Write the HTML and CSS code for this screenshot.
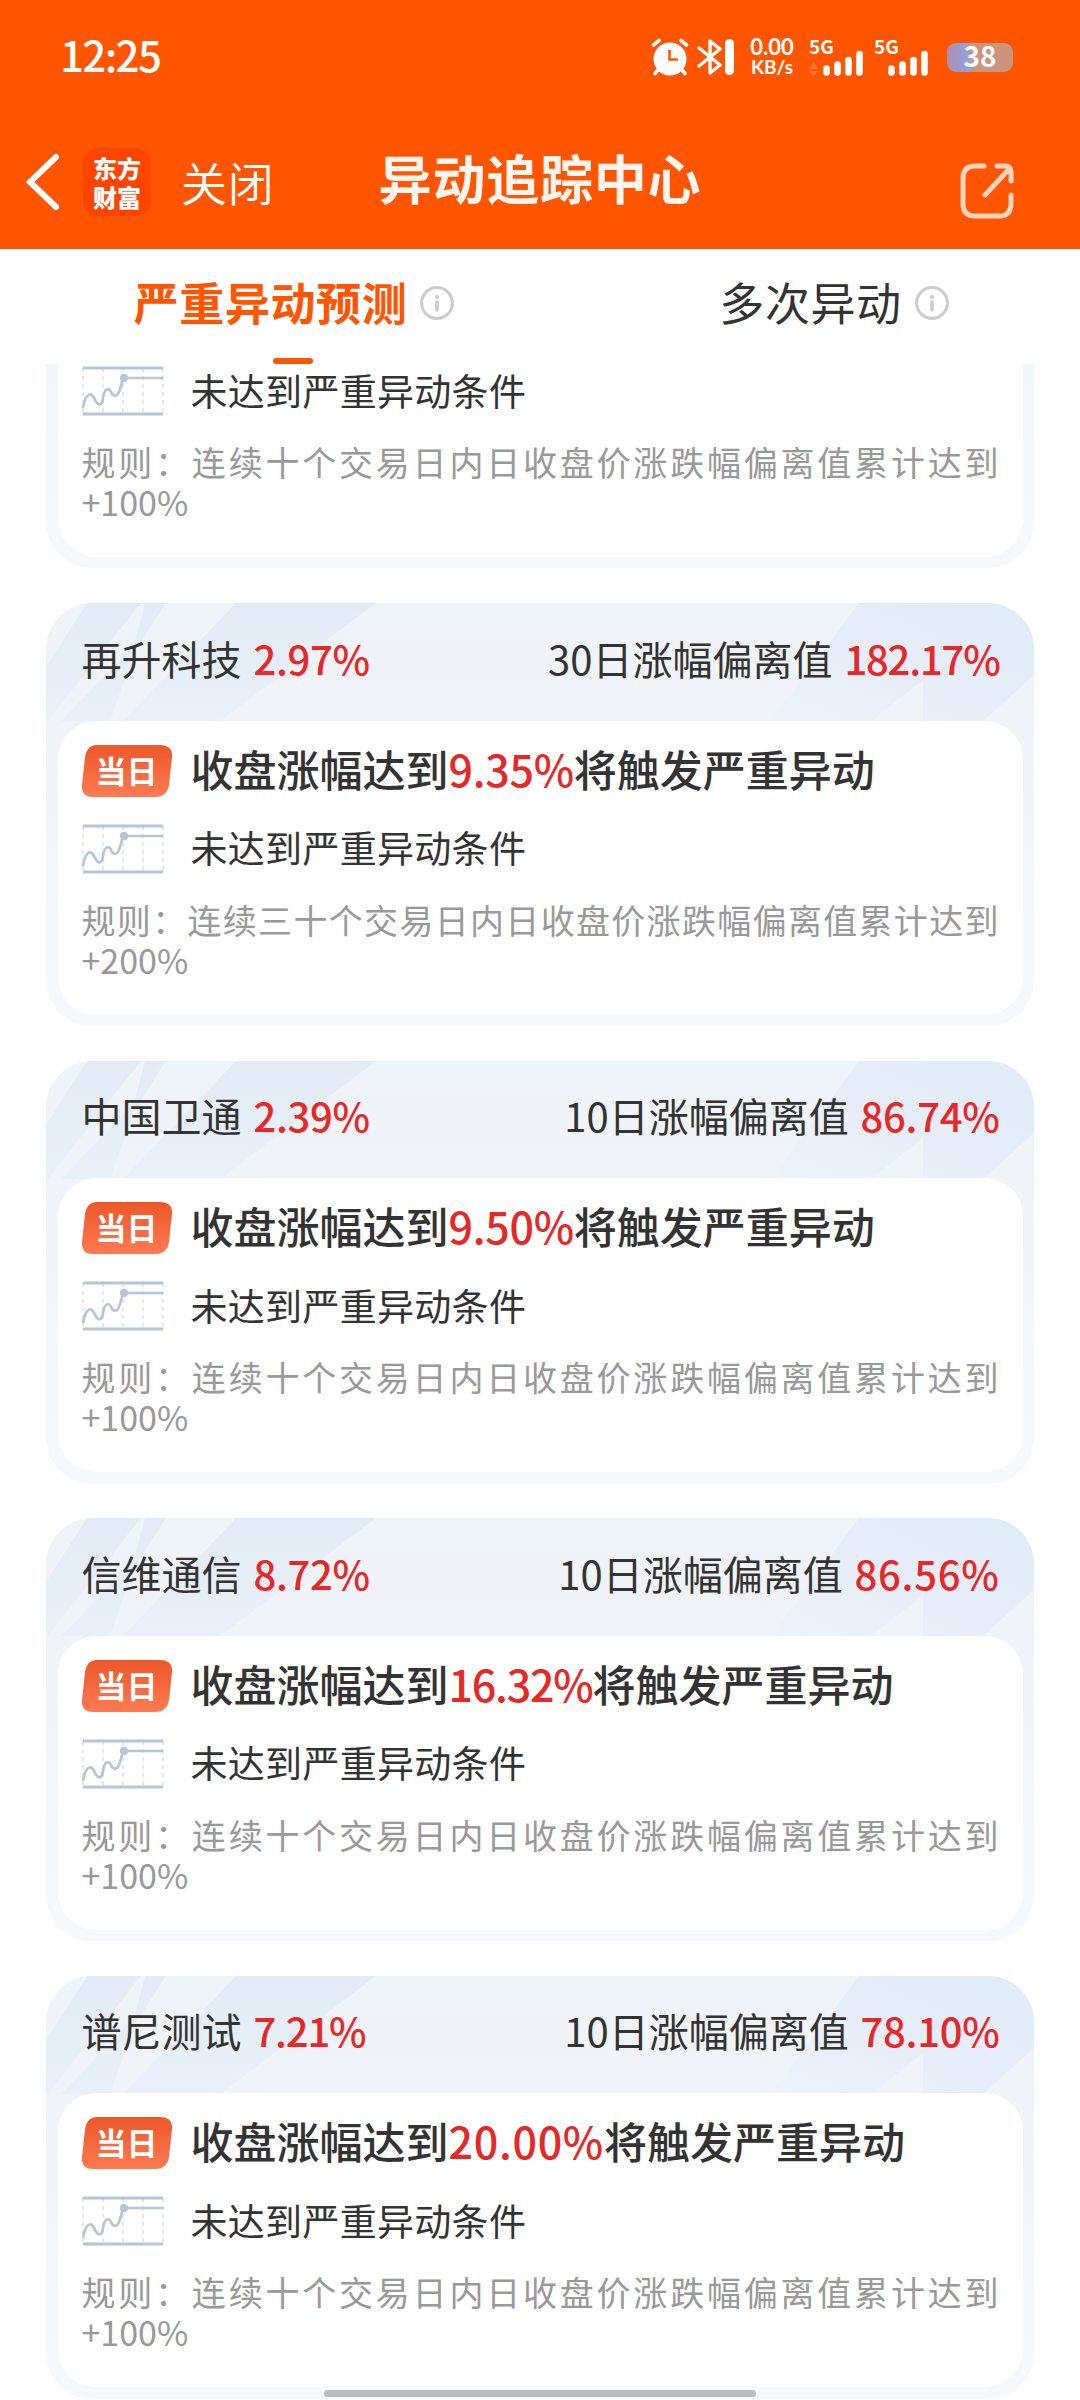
FILE: index.html
```html
<!DOCTYPE html>
<html lang="zh-CN">

<head>
    <meta charset="UTF-8">
    <meta name="viewport" content="width=device-width, initial-scale=1.0">
    <title>异动追踪中心</title>
    <link rel="stylesheet" href="styles.css">
</head>

<body>
    <!-- 公用图形 -->
    <svg class="defs" width="0" height="0">
        <defs>
            <linearGradient id="stripe" x1="0" y1="0" x2="0" y2="1">
                <stop offset="0" stop-color="#e2ebf5" />
                <stop offset="1" stop-color="#e9f0f9" />
            </linearGradient>
            <linearGradient id="stripeRight" x1="0" y1="1" x2="1" y2="0">
                <stop offset="0" stop-color="#edf3fa" />
                <stop offset="0.5" stop-color="#e6edf8" />
                <stop offset="1" stop-color="#deebf8" />
            </linearGradient>
            <linearGradient id="badge" x1="0" y1="0" x2="0" y2="1">
                <stop offset="0" stop-color="#ec5729" />
                <stop offset="1" stop-color="#fe7a52" />
            </linearGradient>
        </defs>
        <symbol id="stripes" viewBox="0 0 988 118">
            <path fill="url(#stripe)" d="M41 0H95L0 120V64Z" />
            <path fill="url(#stripe)" d="M99 0H120L88 50L64 118H16L0 138V134L88 42Z" />
            <path fill="url(#stripe)" d="M190 0H330L174 118H77Z" />
            <path fill="url(#stripeRight)" d="M813 0H988V72L937 118H877V77L825 118H725Z" />
        </symbol>
        <symbol id="today" viewBox="0 0 90 52">
            <path fill="url(#badge)" d="M15 0H78Q91 0 90 12L87 40Q85 52 73 52H11Q-1 52 0 40L3 12Q5 0 15 0Z" />
        </symbol>
        <symbol id="chart" viewBox="0 0 82 50">
            <path d="M1 2V48M21 2V48M41 2V48M61 2V48M81 2V48" stroke="#d3deea" stroke-width="1.4" stroke-dasharray="4 4" />
            <path d="M1 2H81M1 48H81" stroke="#b4c5d8" stroke-width="3" />
            <path d="M1 42C4 25 10 26 13 34C17 41 20 39 21 32C23 20 28 22 30 28C36 34 38 24 41 12H81" fill="none" stroke="#b4c5d8" stroke-width="2.6" />
            <circle cx="42" cy="12" r="4.2" fill="#b4c5d8" />
        </symbol>
        <symbol id="info" viewBox="0 0 34 34">
            <circle cx="17" cy="17" r="15.4" fill="none" stroke="#ccc" stroke-width="3" />
            <circle cx="17" cy="11" r="2.1" fill="#ccc" />
            <path d="M17 16V24" stroke="#ccc" stroke-width="3.6" stroke-linecap="round" />
        </symbol>
    </svg>

    <header class="header">
        <div class="status-bar">
            <span class="time">12:25</span>
            <div class="status-icons">
                <svg class="alarm" width="38" height="38" viewBox="0 0 38 38">
                    <circle cx="19" cy="21" r="16.5" fill="#fff" />
                    <path d="M2.500 7L8 2.500M30 2.500L35.500 7M7 32L4 35.500M31 32L34 35.500" stroke="#fff" stroke-width="3.6" stroke-linecap="round" />
                    <path d="M18.500 12V21.500H27" fill="none" stroke="#ff5500" stroke-width="2.6" />
                </svg>
                <svg class="bluetooth" width="38" height="38" viewBox="0 0 38 38">
                    <path d="M2 10L23 27L13 35V3L23 11L2 28" fill="none" stroke="#fff" stroke-width="3.4" stroke-linejoin="round" stroke-linecap="round" />
                    <rect x="28" y="1" width="9" height="36" rx="4.500" fill="#fff" />
                </svg>
                <div class="speed"><span class="num">0.00</span><span class="unit">KB/s</span></div>
                <div class="signal">
                    <span>5G</span>
                    <svg width="56" height="37" viewBox="0 0 56 37">
                        <path d="M0 30L4.500 23L9 30ZM0 32L4.500 37L9 32Z" fill="#ff7733" />
                        <path d="M17.500 29.500V33.500M28.500 25.500V33.500M39.500 21V33.500M50.500 15V33.500" stroke="#fff" stroke-width="6.600" stroke-linecap="round" />
                    </svg>
                </div>
                <div class="signal">
                    <span>5G</span>
                    <svg width="56" height="37" viewBox="0 0 56 37">
                        <path d="M17.500 29.500V33.500M28.500 25.500V33.500M39.500 21V33.500M50.500 15V33.500" stroke="#fff" stroke-width="6.600" stroke-linecap="round" />
                    </svg>
                </div>
                <div class="battery">38</div>
            </div>
        </div>
        <nav class="nav">
            <div class="nav-left">
                <svg class="back" width="36" height="60" viewBox="0 0 36 60">
                    <path d="M32 5L6 30L32 55" fill="none" stroke="#fff" stroke-width="6" stroke-linecap="round" />
                </svg>
                <div class="logo"><span>东方</span><span>财富</span></div>
                <span class="close">关闭</span>
            </div>
            <h1>异动追踪中心</h1>
            <svg class="share" width="54" height="56" viewBox="0 0 54 56">
                <path d="M24 3H15Q3 3 3 15V41Q3 53 15 53H39Q51 53 51 41V32M37 3H45Q51 3 51 9V18M50 5L25 32" fill="none" stroke="#ffd3bd" stroke-width="5" stroke-linecap="round" />
            </svg>
        </nav>
    </header>

    <div class="tabs">
        <div class="tab active">
            <span>严重异动预测</span>
            <svg width="34" height="34"><use href="#info" /></svg>
        </div>
        <div class="tab">
            <span>多次异动</span>
            <svg width="34" height="34"><use href="#info" /></svg>
        </div>
    </div>

    <main class="list">
        <!-- 列表已滚动，第一张卡片只露出下半部分 -->
        <section class="card first">
            <div class="card-body">
                <div class="row status">
                    <svg class="chart" width="82" height="50"><use href="#chart" /></svg>
                    <span>未达到严重异动条件</span>
                </div>
                <p class="rule">规则：连续十个交易日内日收盘价涨跌幅偏离值累计达到+100%</p>
            </div>
        </section>

        <section class="card">
            <svg class="stripes" width="988" height="118"><use href="#stripes" /></svg>
            <div class="card-head">
                <span>再升科技 <b>2.97%</b></span>
                <span>30日涨幅偏离值 <b class="tight">182.17%</b></span>
            </div>
            <div class="card-body">
                <div class="row trigger">
                    <div class="badge"><svg width="90" height="52"><use href="#today" /></svg><span>当日</span></div>
                    <span>收盘涨幅达到<b>9.35%</b>将触发严重异动</span>
                </div>
                <div class="row status">
                    <svg class="chart" width="82" height="50"><use href="#chart" /></svg>
                    <span>未达到严重异动条件</span>
                </div>
                <p class="rule">规则：连续三十个交易日内日收盘价涨跌幅偏离值累计达到+200%</p>
            </div>
        </section>

        <section class="card">
            <svg class="stripes" width="988" height="118"><use href="#stripes" /></svg>
            <div class="card-head">
                <span>中国卫通 <b>2.39%</b></span>
                <span>10日涨幅偏离值 <b>86.74%</b></span>
            </div>
            <div class="card-body">
                <div class="row trigger">
                    <div class="badge"><svg width="90" height="52"><use href="#today" /></svg><span>当日</span></div>
                    <span>收盘涨幅达到<b>9.50%</b>将触发严重异动</span>
                </div>
                <div class="row status">
                    <svg class="chart" width="82" height="50"><use href="#chart" /></svg>
                    <span>未达到严重异动条件</span>
                </div>
                <p class="rule">规则：连续十个交易日内日收盘价涨跌幅偏离值累计达到+100%</p>
            </div>
        </section>

        <section class="card">
            <svg class="stripes" width="988" height="118"><use href="#stripes" /></svg>
            <div class="card-head">
                <span>信维通信 <b>8.72%</b></span>
                <span>10日涨幅偏离值 <b class="wide">86.56%</b></span>
            </div>
            <div class="card-body">
                <div class="row trigger">
                    <div class="badge"><svg width="90" height="52"><use href="#today" /></svg><span>当日</span></div>
                    <span>收盘涨幅达到<b class="tight">16.32%</b>将触发严重异动</span>
                </div>
                <div class="row status">
                    <svg class="chart" width="82" height="50"><use href="#chart" /></svg>
                    <span>未达到严重异动条件</span>
                </div>
                <p class="rule">规则：连续十个交易日内日收盘价涨跌幅偏离值累计达到+100%</p>
            </div>
        </section>

        <section class="card">
            <svg class="stripes" width="988" height="118"><use href="#stripes" /></svg>
            <div class="card-head">
                <span>谱尼测试 <b class="tight">7.21%</b></span>
                <span>10日涨幅偏离值 <b>78.10%</b></span>
            </div>
            <div class="card-body">
                <div class="row trigger">
                    <div class="badge"><svg width="90" height="52"><use href="#today" /></svg><span>当日</span></div>
                    <span>收盘涨幅达到<b class="wide">20.00%</b>将触发严重异动</span>
                </div>
                <div class="row status">
                    <svg class="chart" width="82" height="50"><use href="#chart" /></svg>
                    <span>未达到严重异动条件</span>
                </div>
                <p class="rule">规则：连续十个交易日内日收盘价涨跌幅偏离值累计达到+100%</p>
            </div>
        </section>
    </main>

    <div class="home-bar"></div>
</body>

</html>
```

FILE: styles.css
```css
* {
    box-sizing: border-box;
}

body {
    margin: 0;
    width: 1080px;
    height: 2400px;
    overflow: hidden;
    display: flex;
    flex-direction: column;
    background-color: #fff;
    color: #333;
    font-family: "Noto Sans CJK SC", "Noto Sans", sans-serif;
}

svg {
    display: block;
    flex-shrink: 0;
}

b {
    font-weight: 500;
    letter-spacing: -0.3px;
    color: #e62828;
}

.tight {
    letter-spacing: -1.2px;
}

.wide {
    letter-spacing: 0.7px;
}

.defs {
    position: absolute;
}

/* 顶部 */
.header {
    height: 249px;
    flex-shrink: 0;
    background-color: #ff5500;
    color: #fff;
}

.status-bar {
    height: 114px;
    padding: 0 67px 0 60px;
    display: flex;
    align-items: center;
    justify-content: space-between;
}

.time {
    padding-bottom: 7px;
    font-size: 42px;
    font-weight: 500;
    letter-spacing: -1.6px;
}

.status-icons {
    display: flex;
    align-items: center;
}

.bluetooth {
    margin-left: 8px;
}

.speed {
    width: 50px;
    margin-left: 12px;
    padding-bottom: 2px;
    display: flex;
    flex-direction: column;
    align-items: center;
    font-family: Lato, sans-serif;
    font-weight: 700;
    white-space: nowrap;
}

.num {
    font-size: 22px;
    line-height: 21px;
}

.unit {
    font-size: 19px;
    line-height: 20px;
}

.signal {
    position: relative;
    margin-left: 12px;
}

.signal + .signal {
    margin-left: 9px;
}

.signal span {
    position: absolute;
    top: -2px;
    left: 0;
    font-size: 19px;
    line-height: 18px;
    font-weight: 700;
}

.battery {
    width: 66px;
    height: 29px;
    margin-left: 17px;
    border-radius: 9px;
    background: linear-gradient(90deg, #b08cb4 0, #8fa4d8 22px, #cb957d 26px);
    font-size: 28px;
    line-height: 25px;
    font-weight: 700;
    text-align: center;
}

.nav {
    height: 135px;
    padding: 0 66px 0 24px;
    display: grid;
    grid-template-columns: 1fr auto 1fr;
    align-items: center;
}

.nav-left {
    display: flex;
    align-items: center;
}

.logo {
    width: 68px;
    height: 68px;
    margin-left: 23px;
    display: flex;
    flex-direction: column;
    align-items: center;
    justify-content: center;
    border-radius: 15px;
    background-color: #ff4400;
    font-size: 24px;
    line-height: 29px;
    font-weight: 900;
}

.close {
    margin-left: 30px;
    font-size: 46px;
    font-weight: 350;
    line-height: 60px;
    letter-spacing: 0.8px;
    padding-bottom: 1px;
}

.nav h1 {
    margin: 0;
    padding-bottom: 9px;
    font-size: 53px;
    font-weight: 700;
    letter-spacing: 0.8px;
    line-height: 60px;
    margin-right: -42px;
    color: #fff4ef;
}

.share {
    justify-self: end;
    margin-top: 18px;
}

/* 标签 */
.tabs {
    height: 115px;
    flex-shrink: 0;
    display: grid;
    grid-template-columns: 1fr 1fr;
}

.tab {
    position: relative;
    padding: 0 0 7px 48px;
    display: flex;
    align-items: center;
    justify-content: center;
    gap: 13px;
    font-size: 45px;
    line-height: 60px;
    letter-spacing: 0.6px;
}

.tab span {
    padding-bottom: 2px;
}

.active {
    color: #ff5500;
    font-weight: 700;
}

.active::after {
    content: "";
    position: absolute;
    left: 273px;
    bottom: 0;
    width: 40px;
    height: 6px;
    border-radius: 3px;
    background-color: #ff5500;
}

/* 列表 */
.list {
    flex: 1;
    min-height: 0;
    padding: 0 46px;
    overflow: hidden;
}

.card {
    position: relative;
    height: 423px;
    margin-bottom: 34.5px;
    padding: 0 11.5px 11.5px;
    display: flex;
    flex-direction: column;
    border-radius: 46px;
    background: linear-gradient(180deg, #eff4f8 0, #f0f3f8 118px, #f2f6fa 240px, #f7f8fb 380px);
    overflow: hidden;
}

.first {
    height: 204px;
    border-radius: 0 0 46px 46px;
    background: linear-gradient(180deg, #f1f6fa, #f7f8fb 160px);
    margin-bottom: 35px;
}

.stripes {
    position: absolute;
    top: 0;
    left: 0;
}

.card-head {
    position: relative;
    height: 117.5px;
    padding: 0 23px 8px 24px;
    display: flex;
    align-items: center;
    justify-content: space-between;
    font-size: 40px;
}

.card-head b {
    margin-left: 3px;
}

.card-body {
    position: relative;
    flex: 1;
    padding: 24px 24px 0 24px;
    border-radius: 38px;
    background-color: #fff;
}

.first .card-body {
    border-radius: 0 0 38px 38px;
    padding-top: 2px;
}

.row {
    display: flex;
    align-items: center;
    white-space: nowrap;
}

.trigger {
    height: 52px;
    font-size: 43px;
    line-height: 52px;
    font-weight: 500;
}

.trigger > span {
    padding-bottom: 6px;
}

.badge {
    position: relative;
    width: 90px;
    margin-right: 19px;
}

.badge span {
    position: absolute;
    top: 0;
    left: 0;
    width: 90px;
    color: #fff;
    font-size: 31px;
    font-weight: 700;
    line-height: 50px;
    text-align: center;
}

.status {
    margin-top: 27px;
    height: 50px;
    font-size: 37px;
    letter-spacing: 0.3px;
}

.status span {
    padding-bottom: 3px;
}

.first .status {
    margin-top: 0;
}

.chart {
    margin-right: 27px;
}

.rule {
    margin: 26px 0 0;
    font-size: 34px;
    line-height: 40px;
    color: #999;
    text-align: justify;
}

.home-bar {
    position: fixed;
    left: 324px;
    bottom: 3px;
    width: 432px;
    height: 7px;
    border-radius: 4px;
    background-color: #bbbcbe;
}
```
